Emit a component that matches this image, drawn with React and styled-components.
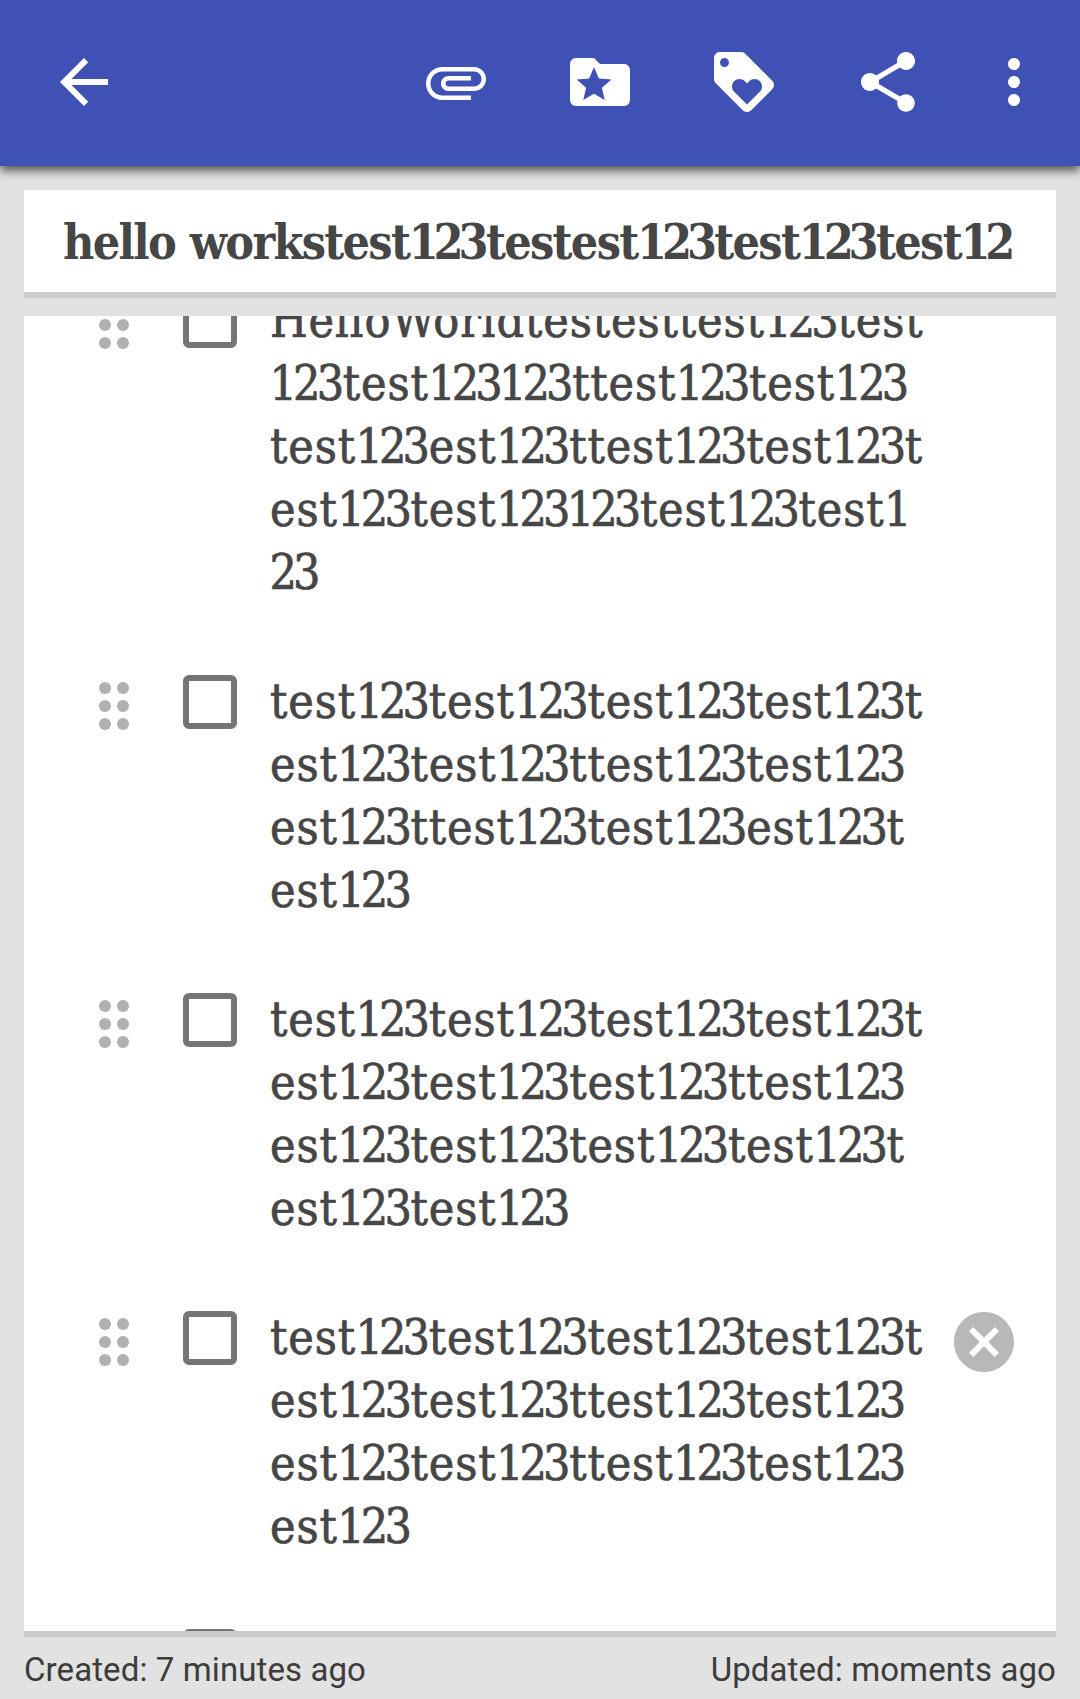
import React from 'react';
import styled, { createGlobalStyle } from 'styled-components';

const GlobalStyle = createGlobalStyle`
  *, *::before, *::after { box-sizing: border-box; }
  body { margin: 0; background: #e2e2e2; }
`;

const slab = `'Roboto Slab', 'DejaVu Serif Condensed', 'DejaVu Serif', serif`;

const Screen = styled.div`
  display: flex;
  flex-direction: column;
  width: 1080px;
  height: 1699px;
  overflow: hidden;
  background: #e2e2e2;
  font-family: Roboto, sans-serif;
`;

const AppBar = styled.header`
  position: relative;
  z-index: 1;
  flex: none;
  display: flex;
  align-items: center;
  height: 166px;
  padding: 0 12px 2px 0;
  background: #3f51b5;
  box-shadow: 0 4px 10px rgba(0, 0, 0, 0.7);
`;

const Actions = styled.nav`
  display: flex;
  margin-left: auto;
`;

const IconButton = styled.button`
  display: flex;
  align-items: center;
  justify-content: center;
  width: ${p => p.$width || 144}px;
  height: 144px;
  padding: 0;
  border: 0;
  background: none;
  color: #fff;
`;

const Glyph = styled.svg`
  display: block;
  flex: none;
  width: 72px;
  height: 72px;
  fill: currentColor;
`;

const Content = styled.main`
  flex: 1;
  min-height: 0;
  display: flex;
  flex-direction: column;
  gap: 18px;
  padding: 24px 24px 0;
`;

const Card = styled.section`
  background: #fff;
  border-bottom: 6px solid #cbcbcb;
`;

const TitleCard = styled(Card)`
  flex: none;
  height: 108px;
  padding: 0 39px;
  overflow: hidden;
`;

const Title = styled.h1`
  margin: 0;
  padding-top: 21px;
  color: #464646;
  font: bold 48px/63px ${slab};
  letter-spacing: -1.7px;
  word-spacing: 1.5px;
  white-space: pre;
`;

const ListCard = styled(Card)`
  flex: 1;
  min-height: 0;
  overflow: hidden;
`;

const List = styled.ul`
  margin: -29px 0 0;
  padding: 0;
  list-style: none;
`;

const Item = styled.li`
  display: flex;
  align-items: flex-start;
  padding-bottom: 64px;
`;

const DragHandle = styled.span`
  display: grid;
  grid-template-columns: 12px 12px;
  gap: 6px;
  margin: 14px 54px 0 75px;
`;

const Dot = styled.i`
  width: 12px;
  height: 12px;
  border-radius: 50%;
  background: #b0b0b0;
`;

const Checkbox = styled.span`
  flex: none;
  width: 54px;
  height: 54px;
  margin: 7px 33px 0 0;
  border: 6px solid #757575;
  border-radius: 6px;
`;

const ItemText = styled.div`
  width: 678px;
  padding-top: 2px;
  color: #464646;
  font: 48px/63px ${slab};
  letter-spacing: 0.9px;
  -webkit-text-stroke: 0.7px #464646;
`;

const Line = styled.div`
  height: 63px;
  white-space: pre;
`;

const Digits = styled.span`
  margin-left: -0.5px;
  margin-right: 2.5px;
  letter-spacing: ${p => p.$tracking}px;
`;

const RemoveButton = styled.button`
  display: flex;
  margin-top: 2px;
  padding: 0;
  border: 0;
  background: none;
  color: #b8b8b8;
`;

const Footer = styled.footer`
  flex: none;
  display: flex;
  justify-content: space-between;
  height: 62px;
  padding: 13px 24px 0;
  color: #3c3c3c;
  font-size: 33px;
  line-height: 39px;
  letter-spacing: 0.1px;
`;

const paths = {
  back: 'M20 11H7.83l5.59-5.59L12 4l-8 8 8 8 1.41-1.41L7.83 13H20v-2z',
  attach: 'M7.5 18C4.46 18 2 15.54 2 12.5S4.46 7 7.5 7H18c2.21 0 4 1.79 4 4s-1.79 4-4 4H9.5C8.12 15 7 13.88 7 12.5S8.12 10 9.5 10H17v1.5H9.5c-.55 0-1 .45-1 1s.45 1 1 1H18c1.38 0 2.5-1.12 2.5-2.5S19.38 8.5 18 8.5H7.5c-2.21 0-4 1.79-4 4s1.79 4 4 4H17V18H7.5z',
  folder: 'M20 6h-8l-2-2H4c-1.1 0-1.99.9-1.99 2L2 18c0 1.1.9 2 2 2h16c1.1 0 2-.9 2-2V8c0-1.1-.9-2-2-2zm-6.42 12L10 15.9 6.42 18l.95-4.07-3.16-2.74 4.16-.36L10 7l1.63 3.84 4.16.36-3.16 2.74.95 4.06z',
  tag: 'M21.41 11.58l-9-9C12.05 2.22 11.55 2 11 2H4c-1.1 0-2 .9-2 2v7c0 .55.22 1.05.59 1.42l9 9c.36.36.86.58 1.41.58.55 0 1.05-.22 1.41-.59l7-7c.37-.36.59-.86.59-1.41 0-.55-.23-1.06-.59-1.42zM5.5 7C4.67 7 4 6.33 4 5.5S4.67 4 5.5 4 7 4.67 7 5.5 6.33 7 5.5 7zm11.77 8.27L13 19.54l-4.27-4.27C8.28 14.81 8 14.19 8 13.5c0-1.38 1.12-2.5 2.5-2.5.69 0 1.32.28 1.77.74l.73.72.73-.73c.45-.45 1.08-.73 1.77-.73 1.38 0 2.5 1.12 2.5 2.5 0 .69-.28 1.32-.73 1.77z',
  share: 'M18 16.08c-.76 0-1.44.3-1.96.77L8.91 12.7c.05-.23.09-.46.09-.7s-.04-.47-.09-.7l7.05-4.11c.54.5 1.25.81 2.04.81 1.66 0 3-1.34 3-3s-1.34-3-3-3-3 1.34-3 3c0 .24.04.47.09.7L8.04 9.81C7.5 9.31 6.79 9 6 9c-1.66 0-3 1.34-3 3s1.34 3 3 3c.79 0 1.5-.31 2.04-.81l7.12 4.16c-.05.21-.08.43-.08.65 0 1.61 1.31 2.92 2.92 2.92s2.92-1.31 2.92-2.92-1.31-2.92-2.92-2.92z',
  more: 'M12 8c1.1 0 2-.9 2-2s-.9-2-2-2-2 .9-2 2 .9 2 2 2zm0 2c-1.1 0-2 .9-2 2s.9 2 2 2 2-.9 2-2-.9-2-2-2zm0 6c-1.1 0-2 .9-2 2s.9 2 2 2 2-.9 2-2-.9-2-2-2z',
  cancel: 'M12 2C6.47 2 2 6.47 2 12s4.47 10 10 10 10-4.47 10-10S17.53 2 12 2zm5 13.59L15.59 17 12 13.41 8.41 17 7 15.59 10.59 12 7 8.41 8.41 7 12 10.59 15.59 7 17 8.41 13.41 12 17 15.59z',
};

const Icon = ({ name }) => (
  <Glyph viewBox="0 0 24 24" aria-hidden="true">
    <path d={paths[name]} />
  </Glyph>
);

// Numerals in the serif face are set wide, so they get their own tracking.
const Tracked = ({ text, tracking }) =>
  text.split(/(\d+)/).map((run, i) =>
    /\d/.test(run) ? <Digits key={i} $tracking={tracking}>{run}</Digits> : run
  );

const items = [
  {
    lines: [
      'HelloWorldtestesttest123test',
      '123test123123ttest123test123',
      'test123est123ttest123test123t',
      'est123test123123test123test1',
      '23',
    ],
  },
  {
    lines: [
      'test123test123test123test123t',
      'est123test123ttest123test123',
      'est123ttest123test123est123t',
      'est123',
    ],
  },
  {
    lines: [
      'test123test123test123test123t',
      'est123test123test123ttest123',
      'est123test123test123test123t',
      'est123test123',
    ],
  },
  {
    active: true,
    lines: [
      'test123test123test123test123t',
      'est123test123ttest123test123',
      'est123test123ttest123test123',
      'est123',
    ],
  },
  { lines: [] },
];

const ChecklistItem = ({ lines, active }) => (
  <Item>
    <DragHandle>
      {[0, 1, 2, 3, 4, 5].map(n => <Dot key={n} />)}
    </DragHandle>
    <Checkbox role="checkbox" aria-checked="false" />
    <ItemText>
      {lines.map((line, i) => (
        <Line key={i}><Tracked text={line} tracking={-3.9} /></Line>
      ))}
    </ItemText>
    {active && (
      <RemoveButton>
        <Icon name="cancel" />
      </RemoveButton>
    )}
  </Item>
);

export default function App() {
  return (
    <Screen>
      <GlobalStyle />
      <AppBar>
        <IconButton $width={168}><Icon name="back" /></IconButton>
        <Actions>
          <IconButton><Icon name="attach" /></IconButton>
          <IconButton><Icon name="folder" /></IconButton>
          <IconButton><Icon name="tag" /></IconButton>
          <IconButton><Icon name="share" /></IconButton>
          <IconButton $width={108}><Icon name="more" /></IconButton>
        </Actions>
      </AppBar>
      <Content>
        <TitleCard>
          <Title>
            <Tracked text="hello workstest123testest123test123test12" tracking={-5.1} />
          </Title>
        </TitleCard>
        <ListCard>
          <List>
            {items.map((item, i) => <ChecklistItem key={i} {...item} />)}
          </List>
        </ListCard>
      </Content>
      <Footer>
        <span>Created: 7 minutes ago</span>
        <span>Updated: moments ago</span>
      </Footer>
    </Screen>
  );
}
